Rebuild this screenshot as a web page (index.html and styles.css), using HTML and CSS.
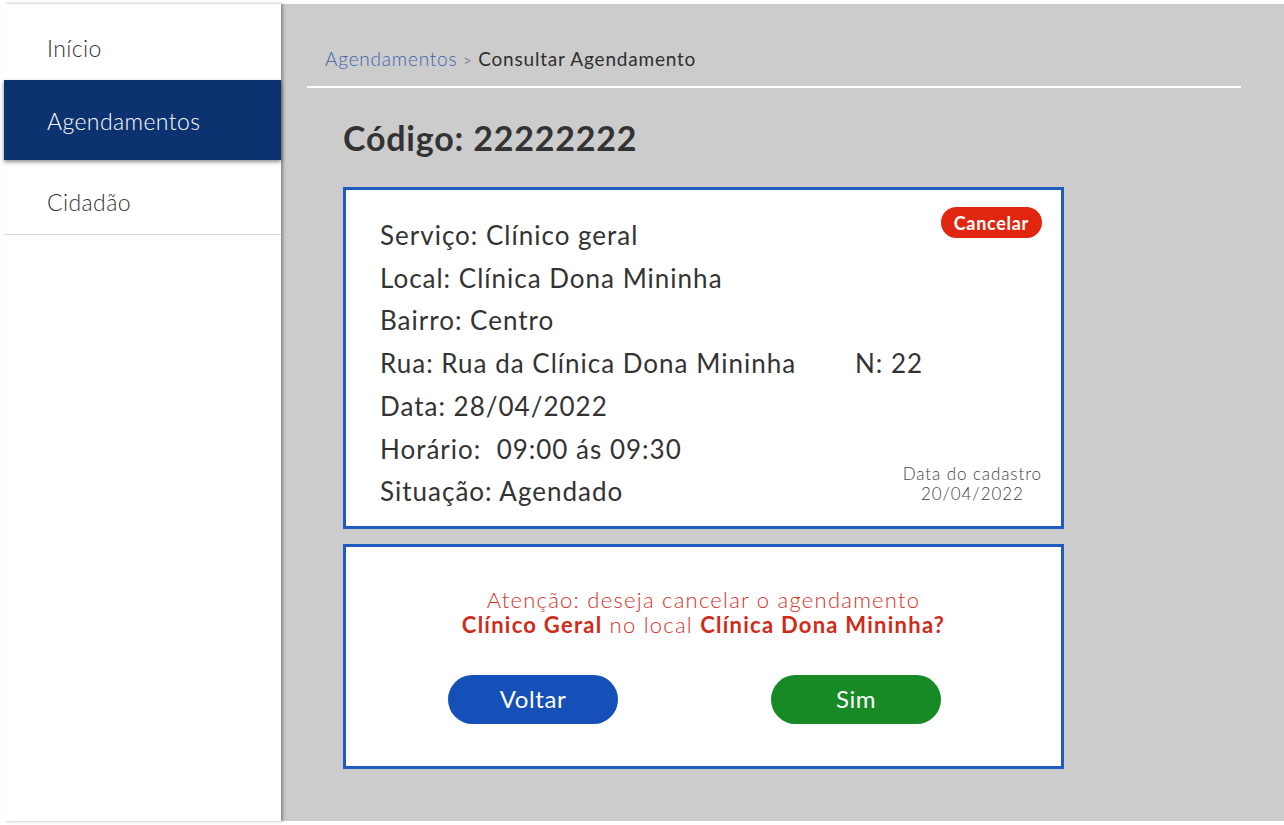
FILE: index.html
```html
<!DOCTYPE html>
<html lang="pt-BR">
<head>
<meta charset="utf-8">
<title>Consultar Agendamento</title>
<link rel="stylesheet" href="styles.css">
</head>
<body>
<div class="frame">
  <nav class="sidebar">
    <a class="nav-item nav-first">Início</a>
    <a class="nav-item nav-active">Agendamentos</a>
    <a class="nav-item nav-last">Cidadão</a>
  </nav>
  <main class="main">
    <div class="crumbs">
      <span class="crumb-link">Agendamentos</span>
      <span class="crumb-sep">&gt;</span>
      <span class="crumb-current">Consultar Agendamento</span>
    </div>
    <h1 class="title">Código: 22222222</h1>
    <section class="card details">
      <div class="info">
        <p class="line">Serviço: Clínico geral</p>
        <p class="line">Local: Clínica Dona Mininha</p>
        <p class="line">Bairro: Centro</p>
        <p class="line"><span class="street">Rua: Rua da Clínica Dona Mininha</span>N: 22</p>
        <p class="line">Data: 28/04/2022</p>
        <p class="line">Horário:&nbsp; 09:00 ás 09:30</p>
        <p class="line">Situação: Agendado</p>
      </div>
      <div class="side">
        <button class="btn-cancel">Cancelar</button>
        <div class="created">Data do cadastro<br>20/04/2022</div>
      </div>
    </section>
    <section class="card confirm">
      <p class="warn">Atenção: deseja cancelar o agendamento<br><strong>Clínico Geral</strong> no local <strong>Clínica Dona Mininha?</strong></p>
      <div class="actions">
        <button class="btn btn-back">Voltar</button>
        <button class="btn btn-yes">Sim</button>
      </div>
    </section>
  </main>
</div>
</body>
</html>
```

FILE: styles.css
```css
* { box-sizing: border-box; }
html, body { margin: 0; padding: 0; }
body {
  background: #ffffff;
  font-family: Lato, "Noto Sans", "DejaVu Sans", sans-serif;
  color: #333333;
}
.frame {
  display: flex;
  height: 825px;
  padding: 4px 0 4px 4px;
}
.sidebar {
  width: 277px;
  flex: none;
  background: #ffffff;
  display: flex;
  flex-direction: column;
  position: relative;
  z-index: 2;
  box-shadow: 2px 0 3px rgba(0, 0, 0, 0.35);
}
.nav-item {
  display: flex;
  align-items: center;
  padding: 2px 0 0 43px;
  font-size: 23px;
  letter-spacing: 0.4px;
  font-weight: 300;
  color: #333333;
}
.nav-first { height: 76px; padding-top: 12px; }
.nav-active {
  height: 80px;
  background: #0d3270;
  color: #ffffff;
  box-shadow: 0 2px 4px rgba(0, 0, 0, 0.45);
  position: relative;
}
.nav-last { height: 75px; border-bottom: 1px solid #d6d6d6; padding-top: 9px; }
.main {
  flex: 1;
  background: #cccccc;
  padding: 0 43px 0 26px;
}
.crumbs {
  padding: 43px 0 16px 18px;
  border-bottom: 2px solid #ffffff;
  font-size: 19px;
  letter-spacing: 0.8px;
}
.crumb-link { color: #3f63ad; font-weight: 300; }
.crumb-sep { color: #8a8a8a; font-size: 15px; }
.crumb-current { color: #2f2f2f; }
.title {
  margin: 30px 0 0 36px;
  font-size: 34px;
  letter-spacing: 0.8px;
  font-weight: 700;
  color: #333333;
  line-height: 40px;
}
.card {
  width: 721px;
  margin-left: 36px;
  background: #ffffff;
  border: 3px solid #1f5bc0;
}
.details {
  margin-top: 29px;
  height: 342px;
  display: flex;
  padding: 17px 19px 0 34px;
}
.info { padding-top: 7px; flex: 1 1 auto; min-width: 0; }
.line {
  margin: 0;
  font-size: 26px;
  letter-spacing: 1px;
  line-height: 42.7px;
  color: #333333;
  white-space: nowrap;
}
.street { display: inline-block; width: 475px; }
.side {
  flex: none;
  display: flex;
  flex-direction: column;
  align-items: flex-end;
  justify-content: space-between;
  padding-bottom: 22px;
}
.btn-cancel {
  border: 0;
  background: #e0260f;
  color: #ffffff;
  font-family: inherit;
  font-size: 18px;
  letter-spacing: 0.7px;
  font-weight: 700;
  height: 31px;
  padding: 0 13px;
  border-radius: 16px;
}
.created {
  text-align: center;
  white-space: nowrap;
  font-size: 17px;
  letter-spacing: 0.9px;
  font-weight: 300;
  line-height: 20px;
  color: #444444;
}
.confirm {
  margin-top: 15px;
  height: 225px;
  padding-top: 40px;
}
.warn {
  margin: 0;
  text-align: center;
  font-size: 22px;
  letter-spacing: 1.25px;
  line-height: 25px;
  font-weight: 300;
  color: #d8321f;
}
.warn strong { font-weight: 700; color: #d02a18; }
.actions {
  display: flex;
  justify-content: center;
  gap: 153px;
  margin-top: 38px;
  padding-right: 18px;
}
.btn {
  width: 170px;
  height: 49px;
  padding-bottom: 3px;
  border: 0;
  border-radius: 25px;
  color: #ffffff;
  font-family: inherit;
  font-size: 24px;
  letter-spacing: 0.6px;
  font-weight: 400;
}
.btn-back { background: #1450b8; }
.btn-yes { background: #178a25; }
```
